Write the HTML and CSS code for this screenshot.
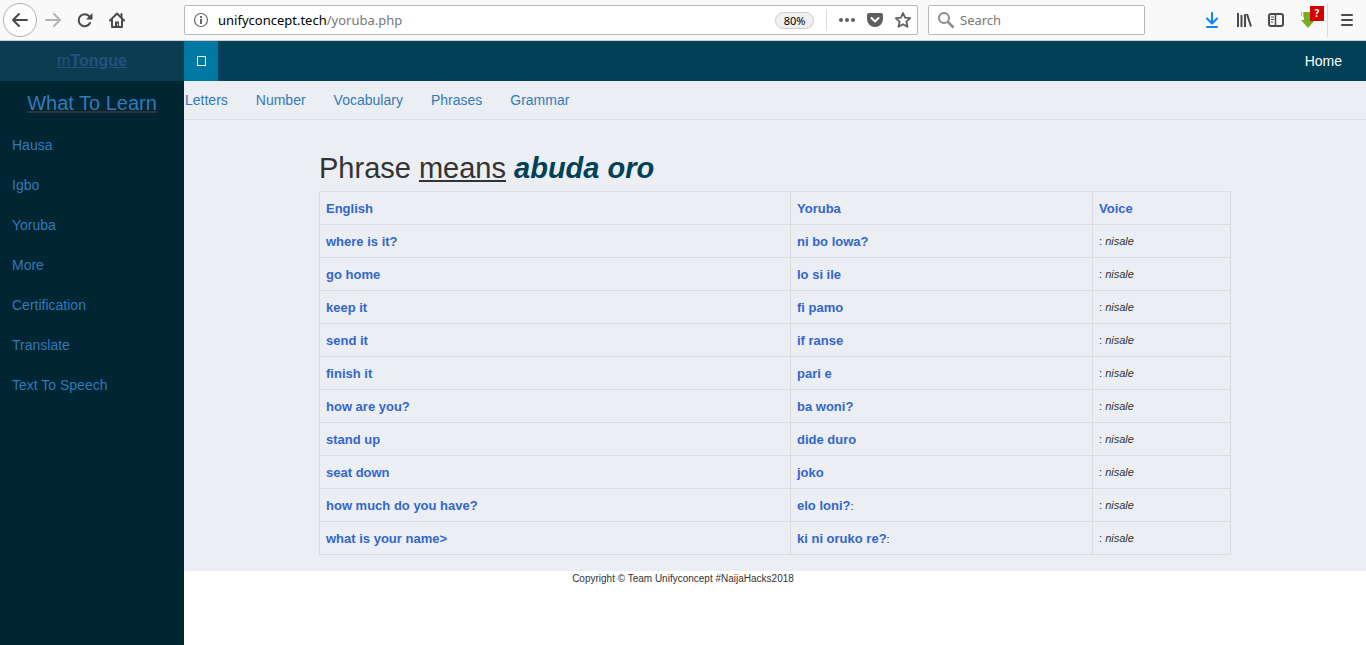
FILE: index.html
```html
<!DOCTYPE html>
<html lang="en">

<head>
  <meta charset="UTF-8" />
  <meta name="viewport" content="width=device-width, initial-scale=1.0" />
  <title>mTongue</title>
  <link rel="stylesheet" href="styles.css">
</head>

<body>
  <!-- Browser toolbar -->
  <div class="toolbar">
    <div class="tool-group">
      <button class="tool-btn back-btn" aria-label="Back">
        <svg width="18" height="18" viewBox="0 0 18 18" fill="none" stroke="#4a4a4a" stroke-width="2" stroke-linecap="round" stroke-linejoin="round"><path d="M16 9H2M8 3L2 9l6 6" /></svg>
      </button>
      <button class="tool-btn" aria-label="Forward">
        <svg width="18" height="18" viewBox="0 0 18 18" fill="none" stroke="#b3b3b3" stroke-width="2" stroke-linecap="round" stroke-linejoin="round"><path d="M2 9h14M10 3l6 6-6 6" /></svg>
      </button>
      <button class="tool-btn" aria-label="Reload">
        <svg width="16" height="16" viewBox="0 0 16 16"><path d="M13 11a6 6 0 1 1-1-7" fill="none" stroke="#4a4a4a" stroke-width="2" stroke-linecap="round" /><path d="M15.500 1v6.500H9z" fill="#4a4a4a" /></svg>
      </button>
      <button class="tool-btn" aria-label="Home page">
        <svg width="16" height="16" viewBox="0 0 16 16" fill="none" stroke="#4a4a4a" stroke-width="2" stroke-linecap="round" stroke-linejoin="round"><path d="M1 8.500L8 1.500l7 7M3 8v7h10V8" /><path d="M6 15V9.500h4V15z" fill="#4a4a4a" stroke="none" /><path d="M12.500 2v3" /><path d="M8.500 12v1" stroke="#f9f9f9" stroke-width="1" /></svg>
      </button>
    </div>

    <div class="url-bar">
      <svg width="16" height="16" viewBox="0 0 16 16" fill="none" stroke="#6a6a6a"><circle cx="8" cy="8" r="6.500" stroke-width="1.200" /><path d="M8 7v5M8 4v2" stroke-width="2" /></svg>
      <span class="url-text"><span class="url-host">unifyconcept.tech</span>/yoruba.php</span>
      <button class="zoom-badge">80%</button>
      <span class="url-line"></span>
      <button class="tool-icon" aria-label="Page actions">
        <svg width="18" height="16" viewBox="0 0 18 16" fill="#5f5f5f"><circle cx="3" cy="8" r="2" /><circle cx="9" cy="8" r="2" /><circle cx="15" cy="8" r="2" /></svg>
      </button>
      <button class="tool-icon" aria-label="Save to Pocket">
        <svg width="18" height="16" viewBox="0 0 18 16"><path d="M3 1h12a2 2 0 0 1 2 2v4A8 8 0 0 1 1 7V3a2 2 0 0 1 2-2z" fill="#5f5f5f" /><path d="M5.500 6L9 9.500 12.500 6" fill="none" stroke="#fff" stroke-width="2" stroke-linecap="round" stroke-linejoin="round" /></svg>
      </button>
      <button class="tool-icon" aria-label="Bookmark">
        <svg width="18" height="18" viewBox="0 0 18 18" fill="none" stroke="#5f5f5f" stroke-width="1.800" stroke-linejoin="round"><path d="M9 2l2.100 4.700 5.100.500-3.800 3.500 1.100 5.100L9 13.200l-4.500 2.600 1.100-5.100-3.800-3.500 5.100-.500z" /></svg>
      </button>
    </div>

    <div class="search-bar">
      <svg width="18" height="18" viewBox="0 0 18 18" fill="none" stroke="#8c8c8c" stroke-width="2"><circle cx="7" cy="7" r="5" /><path d="M11 11l5.500 5.500" stroke-width="2.500" /></svg>
      <input type="text" placeholder="Search" aria-label="Search">
    </div>

    <div class="tool-group tool-right">
      <button class="tool-btn" aria-label="Downloads">
        <svg width="16" height="18" viewBox="0 0 16 18" fill="none" stroke="#0a84ff" stroke-width="2" stroke-linecap="round" stroke-linejoin="round"><path d="M8 2v10M3 7.500L8 12.500l5-5M3 16h10" /></svg>
      </button>
      <button class="tool-btn" aria-label="Library">
        <svg width="16" height="16" viewBox="0 0 16 16" fill="none" stroke="#4a4a4a" stroke-width="2"><path d="M2 1v14M5.500 3v12M9 2v13M11 2l4 12.500" /></svg>
      </button>
      <button class="tool-btn" aria-label="Sidebars">
        <svg width="16" height="16" viewBox="0 0 16 16" fill="none" stroke="#4a4a4a"><rect x="1" y="2" width="14" height="12" rx="2" stroke-width="2" /><path d="M7.500 2v12" stroke-width="1.500" /><path d="M3 5h3M3 7.500h3M3 10h2" /></svg>
      </button>
      <button class="tool-btn download-helper" aria-label="Download helper">
        <svg width="16" height="18" viewBox="0 0 16 18"><path d="M4 1h7v8h4l-7 8-7-8h3z" fill="#79ad20" /><path d="M1 1h1v4H1zM3 1h1v5H3z" fill="#9cc84d" /></svg>
        <span class="alert-badge">?</span>
      </button>
      <span class="tool-line"></span>
      <button class="tool-btn" aria-label="Menu">
        <svg width="14" height="14" viewBox="0 0 14 14" stroke="#4a4a4a" stroke-width="2" stroke-linecap="round"><path d="M2 2h10M2 7h10M2 12h10" /></svg>
      </button>
    </div>
  </div>

  <div class="page">
    <!-- Sidebar -->
    <aside class="sidebar">
      <a class="brand" href="#">m<b>Tongue</b></a>
      <h2 class="sidebar-title"><u><a href="#">What To Learn</a></u></h2>
      <ul class="sidebar-list">
        <li><a href="#">Hausa</a></li>
        <li><a href="#">Igbo</a></li>
        <li><a href="#">Yoruba</a></li>
        <li><a href="#">More</a></li>
        <li><a href="#">Certification</a></li>
        <li><a href="#">Translate</a></li>
        <li><a href="#">Text To Speech</a></li>
      </ul>
    </aside>

    <!-- Main Content -->
    <div class="main">
      <header class="topbar">
        <button class="toggle-btn" aria-label="Toggle sidebar"><span class="toggle-icon"></span></button>
        <a class="home-link" href="#">Home</a>
      </header>

      <div class="content">
        <nav class="tabs">
          <a href="#">Letters</a>
          <a href="#">Number</a>
          <a href="#">Vocabulary</a>
          <a href="#">Phrases</a>
          <a href="#">Grammar</a>
        </nav>

        <main class="lesson">
          <h1>Phrase <u>means</u> <b><i>abuda oro</i></b></h1>
          <table class="phrases">
            <thead>
              <tr><th>English</th><th class="col-yoruba">Yoruba</th><th class="col-voice">Voice</th></tr>
            </thead>
            <tbody>
              <tr><td><b>where is it?</b></td><td><b>ni bo lowa?</b></td><td>: <i>nisale</i></td></tr>
              <tr><td><b>go home</b></td><td><b>lo si ile</b></td><td>: <i>nisale</i></td></tr>
              <tr><td><b>keep it</b></td><td><b>fi pamo</b></td><td>: <i>nisale</i></td></tr>
              <tr><td><b>send it</b></td><td><b>if ranse</b></td><td>: <i>nisale</i></td></tr>
              <tr><td><b>finish it</b></td><td><b>pari e</b></td><td>: <i>nisale</i></td></tr>
              <tr><td><b>how are you?</b></td><td><b>ba woni?</b></td><td>: <i>nisale</i></td></tr>
              <tr><td><b>stand up</b></td><td><b>dide duro</b></td><td>: <i>nisale</i></td></tr>
              <tr><td><b>seat down</b></td><td><b>joko</b></td><td>: <i>nisale</i></td></tr>
              <tr><td><b>how much do you have?</b></td><td><b>elo loni?</b>:</td><td>: <i>nisale</i></td></tr>
              <tr><td><b>what is your name&gt;</b></td><td><b>ki ni oruko re?</b>:</td><td>: <i>nisale</i></td></tr>
            </tbody>
          </table>
        </main>
      </div>

      <footer class="footer">Copyright © Team Unifyconcept #NaijaHacks2018</footer>
    </div>
  </div>
</body>

</html>
```

FILE: styles.css
```css
* {
  box-sizing: border-box;
  margin: 0;
  padding: 0;
}

body {
  font-family: "Liberation Sans", Arial, sans-serif;
  font-size: 14px;
  color: #333;
  background-color: #fff;
  display: flex;
  flex-direction: column;
  min-height: 100vh;
}

a {
  color: #337ab7;
  text-decoration: none;
}

button {
  background: none;
  border: none;
  font-family: inherit;
  cursor: pointer;
}

svg {
  display: block;
}

/* Browser toolbar */
.toolbar {
  display: flex;
  align-items: center;
  height: 41px;
  padding: 0 3px;
  background-color: #f9f9f9;
  border-bottom: 1px solid #ccc;
  font-family: "Noto Sans", "Open Sans", sans-serif;
}

.tool-group {
  display: flex;
  align-items: center;
}

.tool-btn {
  display: flex;
  align-items: center;
  justify-content: center;
  width: 32px;
  height: 32px;
}

.back-btn {
  width: 34px;
  height: 34px;
  border: 1px solid #b0b0b0;
  border-radius: 50%;
  background-color: #fff;
}

.url-bar,
.search-bar {
  display: flex;
  align-items: center;
  height: 30px;
  background-color: #fff;
  border: 1px solid #b8b8b8;
  border-radius: 2px;
}

.url-bar {
  flex: 1;
  margin-left: 51px;
  padding-left: 8px;
}

.url-text {
  flex: 1;
  margin-left: 9px;
  font-size: 13px;
  color: #777;
}

.url-host {
  color: #000;
}

.zoom-badge {
  width: 39px;
  height: 17px;
  border: 1px solid #ccc;
  border-radius: 9px;
  background-color: #f0f0f0;
  font-size: 11px;
  line-height: 15px;
  color: #000;
}

.url-line {
  width: 1px;
  height: 22px;
  margin: 0 6px 0 12px;
  background-color: #ddd;
}

.tool-icon {
  display: flex;
  align-items: center;
  justify-content: center;
  width: 28px;
  height: 28px;
}

.search-bar {
  width: 217px;
  margin-left: 10px;
  padding: 0 8px;
}

.search-bar input {
  flex: 1;
  min-width: 0;
  margin-left: 5px;
  border: none;
  outline: none;
  font-family: inherit;
  font-size: 13px;
}

.search-bar input::placeholder {
  color: #777;
}

.tool-right {
  margin-left: 51px;
}

.download-helper {
  position: relative;
}

.alert-badge {
  position: absolute;
  top: 2px;
  right: 0;
  width: 14px;
  height: 15px;
  background-color: #d70000;
  color: #fff;
  font-size: 10px;
  font-weight: bold;
  line-height: 15px;
}

.tool-line {
  width: 1px;
  height: 34px;
  margin: 0 3px;
  background-color: #ddd;
}

/* Sidebar */
.page {
  display: flex;
  flex: 1;
}

.sidebar {
  width: 184px;
  background-color: #002533;
}

.brand {
  display: block;
  height: 40px;
  background-color: #0b3c51;
  color: #23527c;
  font-size: 16px;
  line-height: 40px;
  text-align: center;
  text-decoration: underline;
}

.sidebar-title {
  font-size: 20px;
  font-weight: normal;
  line-height: 44px;
  text-align: center;
}

.sidebar-list {
  list-style: none;
}

.sidebar-list a {
  display: block;
  padding-left: 12px;
  line-height: 40px;
}

/* Main Content */
.main {
  flex: 1;
}

.topbar {
  display: flex;
  justify-content: space-between;
  height: 40px;
  background-color: #004158;
}

.toggle-btn {
  display: flex;
  align-items: center;
  justify-content: center;
  width: 34px;
  background-color: #0078a4;
}

.toggle-icon {
  width: 9px;
  height: 10px;
  border: 1px solid #fff;
}

.home-link {
  padding-right: 24px;
  color: #fff;
  line-height: 40px;
}

.content {
  padding-bottom: 16px;
  background-color: #ebeef3;
}

.tabs {
  display: flex;
  gap: 28px;
  padding-left: 1px;
  border-bottom: 1px solid #ddd;
  line-height: 38px;
}

.lesson {
  padding: 32px 135px 0;
}

.lesson h1 {
  margin-bottom: 7px;
  font-size: 29px;
  font-weight: normal;
  line-height: 32px;
}

.lesson h1 b {
  color: #004158;
}

.phrases {
  width: 100%;
  table-layout: fixed;
  border-collapse: collapse;
  font-size: 11px;
}

.phrases th,
.phrases td {
  height: 33px;
  padding: 0 6px;
  border: 1px solid #ddd;
  text-align: left;
}

.phrases th,
.phrases b {
  color: #3366cc;
  font-size: 13px;
}

.phrases .col-yoruba {
  width: 302px;
}

.phrases .col-voice {
  width: 138px;
}

/* the right padding equals the sidebar width, so the text is centred in the window */
.footer {
  padding-right: 184px;
  font-size: 10px;
  line-height: 16px;
  text-align: center;
}
```
